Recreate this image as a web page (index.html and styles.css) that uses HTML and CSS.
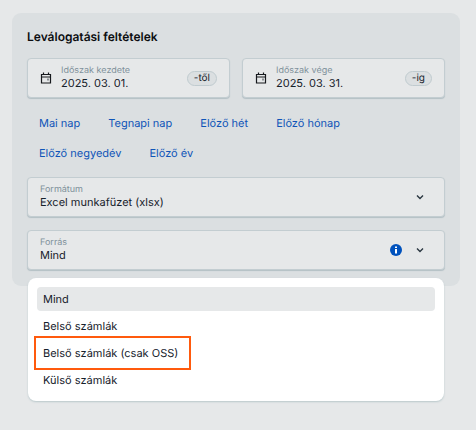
FILE: index.html
```html
<!DOCTYPE html>
<html lang="hu">
<head>
<meta charset="utf-8">
<meta name="viewport" content="width=device-width, initial-scale=1">
<title>Leválogatási feltételek</title>
<link rel="stylesheet" href="styles.css">
</head>
<body>
<main class="page">
  <form class="card">
    <h1 class="title">Leválogatási feltételek</h1>

    <div class="dates">
      <div class="field field-date">
        <svg class="calendar" viewBox="0 0 12 12" aria-hidden="true"><path d="M1.500 2.500h9v8.500h-9zM1.500 5h9M3.500 .5v2M8.500 .5v2"/><path class="dot" d="M7 6.500h2v2H7z"/></svg>
        <div class="field-text">
          <label class="label" for="from">Időszak kezdete</label>
          <input class="value" id="from" type="text" value="2025. 03. 01.">
        </div>
        <span class="chip">-től</span>
      </div>
      <div class="field field-date">
        <svg class="calendar" viewBox="0 0 12 12" aria-hidden="true"><path d="M1.500 2.500h9v8.500h-9zM1.500 5h9M3.500 .5v2M8.500 .5v2"/><path class="dot" d="M7 6.500h2v2H7z"/></svg>
        <div class="field-text">
          <label class="label" for="to">Időszak vége</label>
          <input class="value" id="to" type="text" value="2025. 03. 31.">
        </div>
        <span class="chip">-ig</span>
      </div>
    </div>

    <div class="presets">
      <button class="preset" type="button">Mai nap</button>
      <button class="preset" type="button">Tegnapi nap</button>
      <button class="preset" type="button">Előző hét</button>
      <button class="preset" type="button">Előző hónap</button>
      <button class="preset" type="button">Előző negyedév</button>
      <button class="preset" type="button">Előző év</button>
    </div>

    <div class="selects">
      <div class="field">
        <div class="field-text">
          <label class="label" for="format">Formátum</label>
          <select class="value" id="format"><option>Excel munkafüzet (xlsx)</option></select>
        </div>
        <svg class="chevron" viewBox="0 0 8 6" aria-hidden="true"><path d="M1 1.500l3 3 3-3"/></svg>
      </div>
      <div class="field">
        <div class="field-text">
          <label class="label" for="source">Forrás</label>
          <select class="value" id="source">
            <option>Mind</option>
            <option>Belső számlák</option>
            <option>Belső számlák (csak OSS)</option>
            <option>Külső számlák</option>
          </select>
        </div>
        <button class="info" type="button" aria-label="Információ">
          <svg viewBox="0 0 12 12" aria-hidden="true"><circle cx="6" cy="6" r="6"/><path d="M5 2.500h2v1.500H5zM5 5h2v4.500H5z"/></svg>
        </button>
        <svg class="chevron" viewBox="0 0 8 6" aria-hidden="true"><path d="M1 1.500l3 3 3-3"/></svg>
        <div class="menu" role="listbox" aria-label="Forrás">
          <button class="option selected" type="button" role="option" aria-selected="true">Mind</button>
          <button class="option" type="button" role="option" aria-selected="false">Belső számlák</button>
          <button class="option marked" type="button" role="option" aria-selected="false">Belső számlák (csak OSS)</button>
          <button class="option" type="button" role="option" aria-selected="false">Külső számlák</button>
        </div>
      </div>
    </div>
  </form>
</main>
</body>
</html>
```
FILE: styles.css
```css
* {
  box-sizing: border-box;
}

body {
  min-height: 100vh;
  margin: 0;
  background: #e6e8e9;
  color: #16212b;
  font: 11px/14px Inter, sans-serif;
  text-rendering: geometricPrecision;
}

button,
input,
select {
  margin: 0;
  padding: 0;
  border: 0;
  background: none;
  color: inherit;
  font: inherit;
  text-rendering: inherit;
}

.page {
  min-height: 100vh;
  padding: 13px 16px 16px 12px;
}

.card {
  padding: 16px 15px;
  border-radius: 9px;
  background: #dbdfe1;
}

.title {
  margin: 0 0 13px;
  color: #0b0d10;
  font-size: 12px;
  font-weight: 600;
  line-height: 16px;
}

.dates {
  display: grid;
  grid-template-columns: 1fr 1fr;
  gap: 12px;
}

.field {
  position: relative;
  display: flex;
  align-items: center;
  height: 40px;
  padding: 0 20px 0 12px;
  border: 1px solid #c3cdd1;
  border-radius: 4px;
  background: #e6e8e9;
  box-shadow: 0 1px 1px #b3c0c5;
}

.field-date {
  gap: 9px;
  padding-right: 12px;
}

.field-text {
  display: flex;
  flex: 1;
  flex-direction: column;
  min-width: 0;
}

.label {
  color: #7f919b;
  font-size: 9px;
  line-height: 10px;
}

.value {
  width: 100%;
  height: 14px;
  appearance: none;
  outline: 0;
}

.calendar {
  flex: none;
  width: 12px;
  height: 12px;
  fill: none;
  stroke: #16191d;
  stroke-width: 1.2;
}

.calendar .dot {
  fill: #8a8f93;
  stroke: none;
}

.chip {
  padding: 0 6px;
  border: 1px solid #c0cbcf;
  border-radius: 8px;
  background: #dbdfe1;
  font-size: 10px;
  line-height: 13px;
}

.presets {
  display: flex;
  flex-wrap: wrap;
  gap: 6px 4px;
  margin: 13px 0 12px;
}

.preset {
  height: 24px;
  padding: 0 12px;
  color: #0f55b8;
}

.selects {
  display: grid;
  gap: 13px;
}

.chevron {
  width: 8px;
  height: 6px;
  fill: none;
  stroke: #2a3640;
  stroke-width: 1.4;
}

.info {
  width: 12px;
  height: 12px;
  margin-right: 14px;
}

.info svg {
  display: block;
  fill: #0052bd;
}

.info path {
  fill: #fff;
}

.menu {
  position: absolute;
  top: calc(100% + 9px);
  right: 0;
  left: 0;
  display: grid;
  gap: 3px;
  padding: 9px;
  border-radius: 8px;
  background: #fff;
  box-shadow: 0 1px 2px #b9c8cb;
}

.option {
  position: relative;
  height: 24px;
  padding: 0 6px;
  border-radius: 4px;
  text-align: left;
}

.selected {
  background: #e6e8e9;
}

.marked {
  justify-self: start;
}

.marked::after {
  position: absolute;
  inset: -5px -7px -5px -3px;
  border: 2px solid #ff5a0d;
  content: "";
}
```
